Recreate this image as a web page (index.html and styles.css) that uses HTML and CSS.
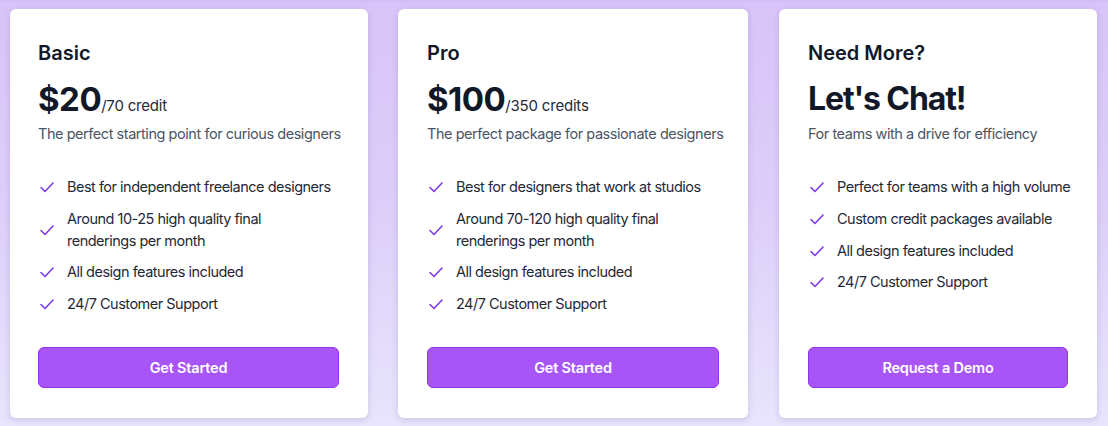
FILE: index.html
```html
<!DOCTYPE html>
<html lang="en">
<head>
  <meta charset="UTF-8">
  <meta name="viewport" content="width=device-width, initial-scale=1.0">
  <title>Pricing</title>
  <link rel="stylesheet" href="styles.css">
</head>
<body>

<!-- Pricing cards -->
<div class="plans">

  <div class="plan plan-basic">
    <div class="plan-name">Basic</div>
    <div class="plan-price"><span class="amount">$20</span><span class="unit">/70 credit</span></div>
    <div class="plan-desc">The perfect starting point for curious designers</div>
    <ul class="features">
      <li><svg class="check" viewBox="0 0 16 16"><path d="M2 8.5l4 4 8-8.5"/></svg><span>Best for independent freelance designers</span></li>
      <li><svg class="check" viewBox="0 0 16 16"><path d="M2 8.5l4 4 8-8.5"/></svg><span>Around 10-25 high quality final<br>renderings per month</span></li>
      <li><svg class="check" viewBox="0 0 16 16"><path d="M2 8.5l4 4 8-8.5"/></svg><span>All design features included</span></li>
      <li><svg class="check" viewBox="0 0 16 16"><path d="M2 8.5l4 4 8-8.5"/></svg><span>24/7 Customer Support</span></li>
    </ul>
    <button class="plan-button">Get Started</button>
  </div>

  <div class="plan plan-pro">
    <div class="plan-name">Pro</div>
    <div class="plan-price"><span class="amount">$100</span><span class="unit">/350 credits</span></div>
    <div class="plan-desc">The perfect package for passionate designers</div>
    <ul class="features">
      <li><svg class="check" viewBox="0 0 16 16"><path d="M2 8.5l4 4 8-8.5"/></svg><span>Best for designers that work at studios</span></li>
      <li><svg class="check" viewBox="0 0 16 16"><path d="M2 8.5l4 4 8-8.5"/></svg><span>Around 70-120 high quality final<br>renderings per month</span></li>
      <li><svg class="check" viewBox="0 0 16 16"><path d="M2 8.5l4 4 8-8.5"/></svg><span>All design features included</span></li>
      <li><svg class="check" viewBox="0 0 16 16"><path d="M2 8.5l4 4 8-8.5"/></svg><span>24/7 Customer Support</span></li>
    </ul>
    <button class="plan-button">Get Started</button>
  </div>

  <div class="plan plan-custom">
    <div class="plan-name">Need More?</div>
    <div class="plan-price"><span class="amount amount-chat">Let's Chat!</span></div>
    <div class="plan-desc">For teams with a drive for efficiency</div>
    <ul class="features">
      <li><svg class="check" viewBox="0 0 16 16"><path d="M2 8.5l4 4 8-8.5"/></svg><span>Perfect for teams with a high volume</span></li>
      <li><svg class="check" viewBox="0 0 16 16"><path d="M2 8.5l4 4 8-8.5"/></svg><span>Custom credit packages available</span></li>
      <li><svg class="check" viewBox="0 0 16 16"><path d="M2 8.5l4 4 8-8.5"/></svg><span>All design features included</span></li>
      <li><svg class="check" viewBox="0 0 16 16"><path d="M2 8.5l4 4 8-8.5"/></svg><span>24/7 Customer Support</span></li>
    </ul>
    <button class="plan-button">Request a Demo</button>
  </div>

</div>

</body>
</html>
```

FILE: styles.css
```css
body {
  font-family: 'Inter', 'Noto Sans', sans-serif;
  margin: 0;
  height: 100vh;
  overflow: hidden;
  background: linear-gradient(to bottom, #d2bdf4 0, #d8c4f8 4px, #ddcff9 50%, #e8e5fc 100%); /* lavender wash */
}

.plans {
  display: flex;
  gap: 30px;
  padding: 9px 0 0 10px;
}

.plan {
  display: flex;
  flex-direction: column;
  box-sizing: border-box;
  height: 409px;
  padding: 30px 29px 30px 28px;
  background-color: #fff;
  border-radius: 6px;
  box-shadow: 0 2px 6px rgba(90, 70, 150, 0.2);
}

.plan-basic { width: 358px; }
.plan-pro { width: 350px; padding-left: 29px; }
.plan-custom { width: 318px; margin-left: 1px; padding-left: 29px; }

.plan-name {
  font-size: 20px;
  line-height: 28px;
  font-weight: 600;
  color: #111827;
}

.plan-price {
  margin-top: 12px;
  line-height: 40px;
  color: #111827;
  white-space: nowrap;
}

.amount {
  font-size: 33px;
  font-weight: 700;
  letter-spacing: -0.5px;
}

.amount-chat {
  font-size: 32px;
  letter-spacing: -1.1px;
}

.unit {
  font-size: 15px;
  letter-spacing: -0.2px;
  color: #1f2937;
}

.plan-desc {
  margin-top: -3px;
  font-size: 14.5px;
  line-height: 22px;
  letter-spacing: -0.45px;
  color: #4b5563;
  white-space: nowrap;
}

.plan-custom .plan-desc { margin-top: -1px; }

.features {
  list-style: none;
  margin: 31px 0 0;
  padding: 0;
  display: flex;
  flex-direction: column;
  gap: 9.5px;
}

.features li {
  display: flex;
  align-items: center;
  gap: 12px;
  font-size: 14.5px;
  line-height: 22px;
  letter-spacing: -0.5px;
  color: #1f2937;
  white-space: nowrap;
}

.plan-custom .features { gap: 9.8px; }

.check {
  flex: none;
  width: 16px;
  height: 16px;
  margin-left: 1px;
  fill: none;
  stroke: #7c3aed;
  stroke-width: 1.6;
  stroke-linecap: round;
  stroke-linejoin: round;
}

.plan-button {
  flex: none;
  margin-top: auto;
  height: 41px;
  border: 1px solid #9333ea;
  border-radius: 6px;
  background-color: #a855f7;
  color: #fff;
  font-family: inherit;
  font-size: 14.5px;
  font-weight: 600;
  letter-spacing: -0.2px;
  cursor: pointer;
}
```
